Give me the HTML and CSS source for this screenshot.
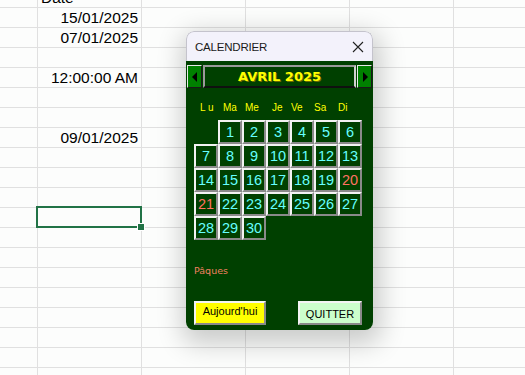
FILE: index.html
```html
<!DOCTYPE html>
<html lang="fr">
<head>
<meta charset="utf-8">
<title>Calendrier</title>
<link rel="stylesheet" href="styles.css">
</head>
<body>
<div class="sheet">
  <div class="row"><div class="hdr"></div><div class="cell left">Date</div></div>
  <div class="row"><div class="hdr"></div><div class="cell">15/01/2025</div></div>
  <div class="row"><div class="hdr"></div><div class="cell">07/01/2025</div></div>
  <div class="row"></div>
  <div class="row"><div class="hdr"></div><div class="cell">12:00:00 AM</div></div>
  <div class="row"></div>
  <div class="row"></div>
  <div class="row"><div class="hdr"></div><div class="cell">09/01/2025</div></div>
  <div class="row"></div>
  <div class="row"></div>
  <div class="row"></div>
  <div class="row"><div class="hdr"></div><div class="cell selected"><span class="handle"></span></div></div>
</div>

<div class="dialog">
  <div class="titlebar">
    <span class="title">CALENDRIER</span>
    <svg class="close" width="12" height="12" viewBox="0 0 12 12"><path d="M1 1 L11 11 M11 1 L1 11" stroke="#222" stroke-width="1.1" fill="none"/></svg>
  </div>
  <div class="body">
    <div class="monthbar">
      <div class="nav"><svg width="6" height="10" viewBox="0 0 6 10"><path d="M5 0 L0 5 L5 10 Z" fill="#000"/></svg></div>
      <div class="month">AVRIL 2025</div>
      <div class="nav"><svg width="6" height="10" viewBox="0 0 6 10"><path d="M1 0 L6 5 L1 10 Z" fill="#000"/></svg></div>
    </div>
    <div class="weekdays">
      <span class="wl">L u</span><span>Ma</span><span>Me</span><span>Je</span><span>Ve</span><span>Sa</span><span>Di</span>
    </div>
    <div class="grid">
      <span class="empty"></span><span class="d">1</span><span class="d">2</span><span class="d">3</span><span class="d">4</span><span class="d">5</span><span class="d">6</span>
      <span class="d">7</span><span class="d">8</span><span class="d">9</span><span class="d">10</span><span class="d">11</span><span class="d">12</span><span class="d">13</span>
      <span class="d">14</span><span class="d">15</span><span class="d">16</span><span class="d">17</span><span class="d">18</span><span class="d">19</span><span class="d red">20</span>
      <span class="d red">21</span><span class="d">22</span><span class="d">23</span><span class="d">24</span><span class="d">25</span><span class="d">26</span><span class="d">27</span>
      <span class="d">28</span><span class="d">29</span><span class="d">30</span>
    </div>
    <div class="holiday">Pâques</div>
    <div class="buttons">
      <button class="btn today">Aujourd'hui</button>
      <button class="btn quit">QUITTER</button>
    </div>
  </div>
</div>
</body>
</html>
```

FILE: styles.css
```css
html, body {
  margin: 0;
  padding: 0;
}
body {
  width: 525px;
  height: 375px;
  overflow: hidden;
  background-color: #fcfdfc;
  background-image:
    linear-gradient(to bottom, transparent 7px, #e0e0e0 7px, #e0e0e0 8px, transparent 8px),
    linear-gradient(to right, transparent 37px, #e0e0e0 37px, #e0e0e0 38px, transparent 38px);
  background-size: 100% 20px, 104px 100%;
  background-position: 0 0, 0 0;
  font-family: "Liberation Sans", Arial, sans-serif;
  position: relative;
}
.sheet {
  margin-top: -13px;
}
.row {
  height: 20px;
  display: flex;
}
.hdr {
  width: 37px;
  flex: none;
}
.cell {
  width: 105px;
  height: 20px;
  box-sizing: border-box;
  padding: 0 4px 0 4px;
  font-size: 15.5px;
  line-height: 18px;
  color: #000;
  text-align: right;
  display: flex;
  align-items: flex-end;
  justify-content: flex-end;
}
.cell.left {
  justify-content: flex-start;
}
.cell.selected {
  position: relative;
  border: 2px solid #217346;
  width: 106px;
  height: 22px;
  margin-top: -1px;
  margin-left: -1px;
}
.handle {
  position: absolute;
  right: -4px;
  bottom: -4px;
  width: 6px;
  height: 6px;
  background: #217346;
  border: 1px solid #fff;
  box-sizing: content-box;
  margin: -1px;
}

.dialog {
  position: absolute;
  left: 186px;
  top: 31px;
  width: 187px;
  height: 299px;
  border-radius: 8px;
  overflow: hidden;
  display: flex;
  flex-direction: column;
  box-shadow: 2px 8px 26px 6px rgba(0, 0, 0, 0.2);
  font-family: "DejaVu Sans", Tahoma, sans-serif;
}
.titlebar {
  height: 30px;
  flex: none;
  box-sizing: border-box;
  background: #f3f2fb;
  border: 1px solid #c4c3cc;
  border-bottom: none;
  border-radius: 8px 8px 0 0;
  display: flex;
  align-items: center;
  justify-content: space-between;
  padding: 1px 8px 0 8px;
}
.title {
  font-family: "Liberation Sans", Arial, sans-serif;
  font-size: 11.5px;
  color: #1a1a1a;
  letter-spacing: -0.2px;
}
.close {
  display: block;
  margin-right: 0;
}
.body {
  flex: 1;
  background: #004000;
  display: flex;
  flex-direction: column;
}
.monthbar {
  display: flex;
  height: 23px;
  margin-top: 4px;
  padding-left: 1px;
  gap: 1px;
}
.nav {
  width: 15px;
  height: 23px;
  box-sizing: border-box;
  background: #008000;
  border-top: 1px solid #e8e8e8;
  border-left: 1px solid #e8e8e8;
  border-right: 1px solid #1a1a1a;
  border-bottom: 1px solid #1a1a1a;
  display: flex;
  align-items: center;
  justify-content: center;
}
.month {
  width: 153px;
  height: 23px;
  box-sizing: border-box;
  border: 2px solid #9a9a9a;
  border-bottom-color: #101010;
  border-right-color: #d0d0d0;
  color: #ffff00;
  font-weight: bold;
  font-size: 13px;
  line-height: 19px;
  text-align: center;
  text-shadow: 1px 1px 0 #6b6b00;
}
.weekdays {
  display: grid;
  grid-template-columns: 23px 22px 27px 19px 23px 24px auto;
  margin-top: 14px;
  padding-left: 14px;
  height: 12px;
  font-family: "Liberation Sans", Arial, sans-serif;
  font-size: 10px;
  line-height: 12px;
  color: #ffff00;
}
.grid {
  display: grid;
  grid-template-columns: repeat(7, 24px);
  grid-auto-rows: 24px;
  margin-top: 6px;
  padding-left: 8px;
}
.d {
  box-sizing: border-box;
  border-top: 2px solid #f2f2f2;
  border-left: 2px solid #f2f2f2;
  border-right: 2px solid #8a8a8a;
  border-bottom: 2px solid #8a8a8a;
  color: #66ffff;
  font-family: "Liberation Sans", Arial, sans-serif;
  font-size: 14.5px;
  line-height: 20px;
  text-align: center;
}
.d.red {
  color: #ff7262;
}
.holiday {
  margin-top: 25px;
  padding-left: 8px;
  height: 12px;
  font-size: 9.5px;
  line-height: 12px;
  color: #f08060;
}
.buttons {
  display: flex;
  justify-content: space-between;
  margin-top: 24px;
  padding: 0 11px 0 8px;
}
.btn {
  height: 24px;
  box-sizing: border-box;
  border-top: 2px solid #f4f4f4;
  border-left: 2px solid #f4f4f4;
  border-right: 2px solid #8a8a8a;
  border-bottom: 2px solid #8a8a8a;
  font-family: "Liberation Sans", Arial, sans-serif;
  font-size: 11px;
  color: #000;
  padding: 0;
  margin: 0;
}
.today {
  width: 72px;
  background: #ffff00;
  padding-bottom: 4px;
}
.quit {
  width: 64px;
  background: #ccffcc;
  padding-top: 1px;
}
```
